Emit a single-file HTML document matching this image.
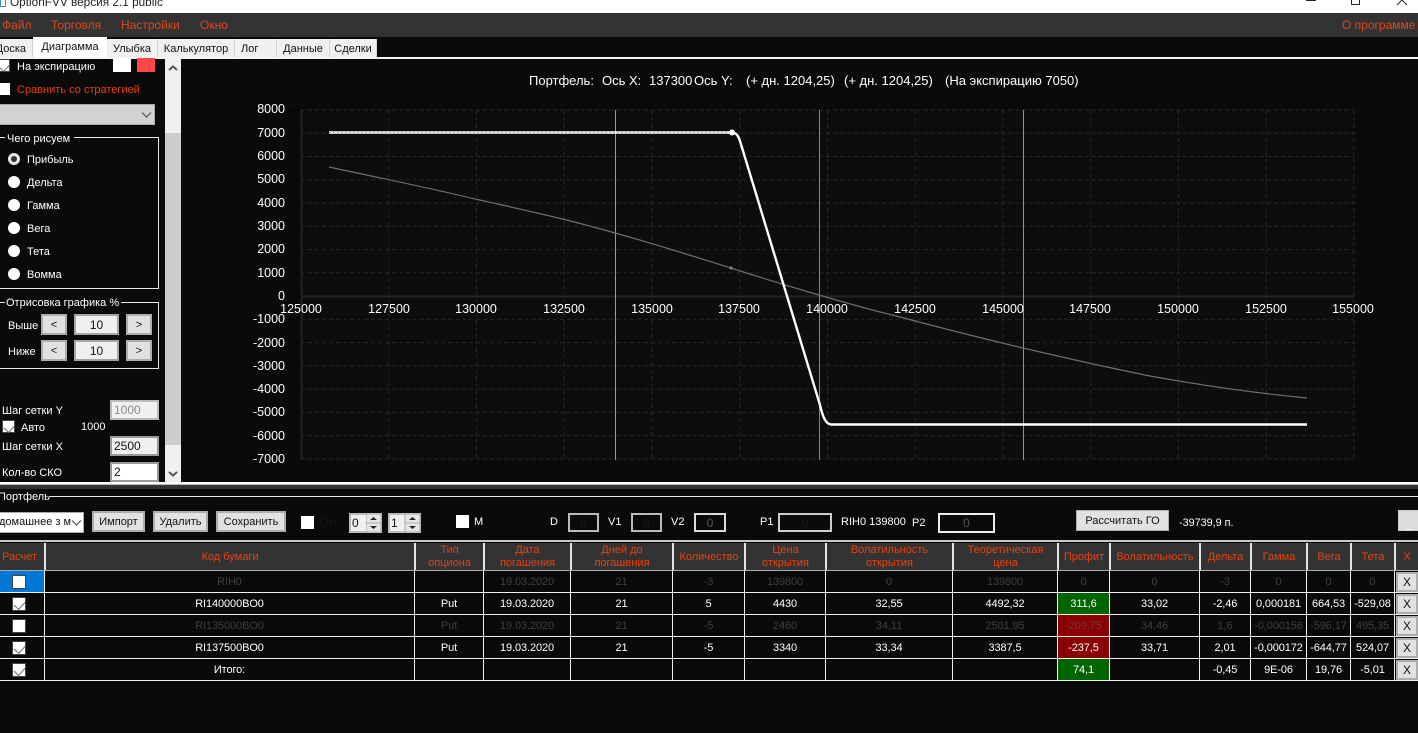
<!DOCTYPE html>
<html lang="ru"><head><meta charset="utf-8"><title>OptionFVV</title>
<style>
*{box-sizing:border-box}
html,body{margin:0;padding:0;width:1418px;height:733px;overflow:hidden;background:#0a0a0a}
body{position:relative;font-family:"Liberation Sans",sans-serif;font-size:11px;color:#fff}
.b,.t{position:absolute}
.t{white-space:nowrap;line-height:14px;height:14px}
.o{color:#e8400f}
.m{color:#d9481e;font-size:12px}
.tab{position:absolute;top:39px;height:18px;background:#f0f0f0;color:#111;text-align:center;line-height:20px;font-size:11px;border-right:1px solid #d4d4d4;overflow:hidden}
.btn{position:absolute;background:#e1e1e1;border:2px solid #adadad;color:#111;text-align:center;font-size:11px;display:flex;align-items:center;justify-content:center}
.in{position:absolute;background:#f0f0f0;border:2px solid #999;color:#111;font-size:12px;padding-left:2px;display:flex;align-items:center}
.box{position:absolute;background:#0a0a0a;border:2px solid #bbb;color:#222;font-size:12px;display:flex;align-items:center;justify-content:center}
.cb{position:absolute;width:13px;height:13px;background:#fff;border:1px solid #444}
.ck::after{content:"";position:absolute;left:3px;top:1px;width:6px;height:9px;border:solid #666;border-width:0 1.5px 1.5px 0;transform:rotate(42deg)}
.rd{position:absolute;left:8px;width:12px;height:12px;border-radius:50%;background:#fff}
.gl{position:absolute;background:#e8e8e8}
table{position:absolute;left:0;top:543px;width:1418px;table-layout:fixed;border-collapse:separate;border-spacing:0}
th{height:28px;padding:1px 0 0;background:#333;color:#e8400f;font-weight:normal;font-size:11px;line-height:13px;border-left:1px solid #e4e4e4;border-right:1px solid #e4e4e4;border-bottom:1px solid #aaa;text-align:center;overflow:hidden;white-space:nowrap}
th:first-child{border-left:0;padding-right:5px}
th:last-child{border-right:0}
td{height:22px;padding:1px 0 0;background:#0a0a0a;border-right:1px solid #f0f0f0;border-bottom:1px solid #f0f0f0;text-align:center;font-size:11px;letter-spacing:-.1px;position:relative;white-space:nowrap;overflow:hidden}
td:last-child{border-right:0}
tr.d td{color:#3e3e3e}
td.g{background:#006400}
td.r{background:#8b0000}
tr.d td.r{color:#6e3c3c}
td .cb{left:12px;top:4px;width:14px;height:14px}
.x{position:absolute;left:1px;top:1px;width:22px;height:20px;background:#e1e1e1;border:2px solid #adadad;color:#111;font-size:12px;line-height:16px;text-align:center}
</style></head><body>

<!-- title bar -->
<div class="b" style="left:0;top:0;width:1418px;height:13px;background:#fff;overflow:hidden">
<div class="t" style="left:10px;top:-5px;color:#222;font-size:11.8px">OptionFVV версия 2.1 public</div>
<div class="b" style="left:0;top:0;width:6px;height:7px;border:1px solid #3a8ad0;border-top:0"></div>
<div class="b" style="left:1306px;top:0;width:10px;height:1px;background:#222"></div>
<div class="b" style="left:1351px;top:0;width:9px;height:5px;border:1px solid #222;border-top:0"></div>
<svg class="b" style="left:1396px;top:0" width="14" height="6"><path d="M1 5L6 0L11 5" fill="none" stroke="#222"/></svg>
</div>

<!-- menu -->
<div class="b" style="left:0;top:13px;width:1418px;height:24px;background:#333"></div>
<div class="t m" style="left:2px;top:18px">Файл</div>
<div class="t m" style="left:51px;top:18px">Торговля</div>
<div class="t m" style="left:121px;top:18px">Настройки</div>
<div class="t m" style="left:200px;top:18px">Окно</div>
<div class="t m" style="left:1342px;top:18px">О программе</div>

<!-- tabs -->
<div class="tab" style="left:0;width:33px;text-align:right;padding-right:6px;direction:rtl"><span style="direction:ltr;unicode-bidi:embed">Доска</span></div>
<div class="tab" style="left:33px;top:37px;height:21px;width:74px;background:#fff;line-height:21px;border:0">Диаграмма</div>
<div class="tab" style="left:107px;width:51px">Улыбка</div>
<div class="tab" style="left:158px;width:77px">Калькулятор</div>
<div class="tab" style="left:235px;width:42px;text-align:left;padding-left:6px">Лог</div>
<div class="tab" style="left:277px;width:53px">Данные</div>
<div class="tab" style="left:330px;width:47px">Сделки</div>
<div class="b" style="left:0;top:57px;width:1418px;height:2px;background:#f4f4f4"></div>

<!-- scrollbar -->
<div class="b" style="left:165px;top:59px;width:16px;height:423px;background:#f0f0f0"></div>
<div class="b" style="left:165px;top:133px;width:16px;height:312px;background:#cdcdcd"></div>
<svg class="b" style="left:165px;top:62px" width="16" height="12"><path d="M4 8L8 4.5L12 8" fill="none" stroke="#555" stroke-width="2"/></svg>
<svg class="b" style="left:165px;top:468px" width="16" height="12"><path d="M4 4L8 7.5L12 4" fill="none" stroke="#555" stroke-width="2"/></svg>

<!-- left panel -->
<div class="cb ck" style="left:-3px;top:59px"></div>
<div class="t" style="left:17px;top:60px">На экспирацию</div>
<div class="b" style="left:113px;top:58px;width:18px;height:14px;background:#fff"></div>
<div class="b" style="left:137px;top:58px;width:18px;height:14px;background:#ff4545"></div>
<div class="cb" style="left:-3px;top:83px;border:0;height:12px"></div>
<div class="t o" style="left:17px;top:83px">Сравнить со стратегией</div>
<div class="b" style="left:-2px;top:104px;width:157px;height:21px;background:#d2d2d2;border:1px solid #aaa"></div>
<svg class="b" style="left:141px;top:111px" width="11" height="8"><path d="M1 1.5L5.5 6L10 1.5" fill="none" stroke="#555" stroke-width="1.2"/></svg>

<div class="gl" style="left:0;top:137px;width:5px;height:1px"></div>
<div class="gl" style="left:74px;top:137px;width:85px;height:1px"></div>
<div class="gl" style="left:158px;top:137px;width:1px;height:152px"></div>
<div class="gl" style="left:0;top:288px;width:159px;height:1px"></div>
<div class="t" style="left:7px;top:132px">Чего рисуем</div>
<div class="rd" style="top:153px;background:#333;border:3px solid #e8e8e8"></div>
<div class="t" style="left:27px;top:153px">Прибыль</div>
<div class="rd" style="top:176px"></div><div class="t" style="left:27px;top:176px">Дельта</div>
<div class="rd" style="top:199px"></div><div class="t" style="left:27px;top:199px">Гамма</div>
<div class="rd" style="top:222px"></div><div class="t" style="left:27px;top:222px">Вега</div>
<div class="rd" style="top:245px"></div><div class="t" style="left:27px;top:245px">Тета</div>
<div class="rd" style="top:268px"></div><div class="t" style="left:27px;top:268px">Вомма</div>

<div class="gl" style="left:0;top:302px;width:5px;height:1px"></div>
<div class="gl" style="left:121px;top:302px;width:38px;height:1px"></div>
<div class="gl" style="left:158px;top:302px;width:1px;height:67px"></div>
<div class="gl" style="left:0;top:368px;width:159px;height:1px"></div>
<div class="t" style="left:6px;top:296px;font-size:11px">Отрисовка графика %</div>
<div class="t" style="left:8px;top:319px">Выше</div>
<div class="btn" style="left:41px;top:314px;width:26px;height:21px">&lt;</div>
<div class="in" style="left:74px;top:314px;width:45px;height:21px;justify-content:center;padding:0;border-color:#a5a5a5">10</div>
<div class="btn" style="left:126px;top:314px;width:26px;height:21px">&gt;</div>
<div class="t" style="left:8px;top:345px">Ниже</div>
<div class="btn" style="left:41px;top:340px;width:26px;height:21px">&lt;</div>
<div class="in" style="left:74px;top:340px;width:45px;height:21px;justify-content:center;padding:0;border-color:#a5a5a5">10</div>
<div class="btn" style="left:126px;top:340px;width:26px;height:21px">&gt;</div>

<div class="t" style="left:2px;top:404px">Шаг сетки Y</div>
<div class="in" style="left:110px;top:400px;width:49px;height:20px;color:#8a8a8a;border-color:#bbb">1000</div>
<div class="cb ck" style="left:2px;top:420px;width:13px;height:13px"></div>
<div class="t" style="left:21px;top:421px">Авто</div>
<div class="t" style="left:81px;top:420px">1000</div>
<div class="t" style="left:2px;top:440px">Шаг сетки X</div>
<div class="in" style="left:110px;top:436px;width:49px;height:20px">2500</div>
<div class="t" style="left:2px;top:466px">Кол-во СКО</div>
<div class="in" style="left:110px;top:462px;width:49px;height:20px;background:#fff">2</div>

<!-- chart -->
<svg class="b" style="left:181px;top:59px" width="1237" height="423" viewBox="181 59 1237 423">
<rect x="301" y="110" width="1053" height="349" fill="#0d0d0d"/>
<path d="M301 133.3H1354M301 156.5H1354M301 179.8H1354M301 203H1354M301 226.3H1354M301 249.6H1354M301 272.8H1354M301 319.3H1354M301 342.6H1354M301 365.9H1354M301 389.1H1354M301 412.4H1354M301 435.6H1354M301 459H1354M301 110H1354" stroke="#262626" stroke-dasharray="4 3" fill="none"/>
<path d="M388.8 110V459M476.5 110V459M564.3 110V459M652 110V459M739.8 110V459M827.5 110V459M915.3 110V459M1003 110V459M1090.8 110V459M1178.5 110V459M1266.3 110V459M1354 110V459" stroke="#262626" stroke-dasharray="4 3" fill="none"/>
<path d="M301.5 110V459M301 296.5H1354" stroke="#242424" stroke-width="2" fill="none"/>
<path d="M288 110H301M288 319.3H301M288 296H301" stroke="#000" fill="none"/>
<path d="M615.5 110V460" stroke="#9a9a9a"/>
<path d="M819.5 110V460" stroke="#7f8890"/>
<path d="M1023.5 110V460" stroke="#b08590"/>
<path d="M329 167C380 178 430 188 475 199C525 210 570 220 615 233C655 244 695 257 731 268C765 279 795 288 819 295C850 304 875 311 900 317C945 329 985 339 1023 348C1070 359 1110 368 1150 376C1205 386 1255 393 1307 398" fill="none" stroke="#6e6e6e" stroke-width="1.2"/>
<circle cx="731" cy="268" r="1.5" fill="#888"/>
<path d="M329 132.5H731C736 132.5 738 135 740 141L820 405C823 418 826 424 831 424.5H1307" fill="none" stroke="#fff" stroke-width="2.4"/>
<path d="M329 132.5H731" stroke="#999" stroke-width="0.8" stroke-dasharray="2 2" fill="none"/>
<circle cx="732" cy="132.5" r="3" fill="#fff"/>
<g font-family="Liberation Sans" font-size="12.5" fill="#fff">
<g font-size="13">
<text x="529" y="85">Портфель:</text><text x="602" y="85">Ось X:</text><text x="649" y="85">137300</text><text x="694" y="85">Ось Y:</text><text x="746" y="85">(+ дн. 1204,25)</text><text x="844" y="85">(+ дн. 1204,25)</text><text x="945" y="85">(На экспирацию 7050)</text>
</g>
<g text-anchor="end">
<text x="285" y="113">8000</text><text x="285" y="137">7000</text><text x="285" y="160">6000</text><text x="285" y="183">5000</text><text x="285" y="207">4000</text><text x="285" y="230">3000</text><text x="285" y="253">2000</text><text x="285" y="277">1000</text><text x="285" y="300">0</text><text x="285" y="323">-1000</text><text x="285" y="347">-2000</text><text x="285" y="370">-3000</text><text x="285" y="393">-4000</text><text x="285" y="416">-5000</text><text x="285" y="440">-6000</text><text x="285" y="463">-7000</text>
</g>
<g text-anchor="middle">
<text x="301" y="313">125000</text><text x="389" y="313">127500</text><text x="476" y="313">130000</text><text x="564" y="313">132500</text><text x="652" y="313">135000</text><text x="739" y="313">137500</text><text x="827" y="313">140000</text><text x="915" y="313">142500</text><text x="1003" y="313">145000</text><text x="1090" y="313">147500</text><text x="1178" y="313">150000</text><text x="1266" y="313">152500</text><text x="1353" y="313">155000</text>
</g>
</g>
</svg>

<!-- splitter -->
<div class="b" style="left:0;top:482px;width:1418px;height:2px;background:#fff"></div>
<div class="b" style="left:0;top:484px;width:1418px;height:1px;background:#bbb"></div>
<div class="b" style="left:0;top:485px;width:1418px;height:4px;background:#333"></div>

<!-- portfolio -->
<div class="t" style="left:-2px;top:490px">Портфель</div>
<div class="gl" style="left:49px;top:496px;width:1369px;height:1px"></div>
<div class="b" style="left:-2px;top:512px;width:86px;height:21px;background:#fff;border:1px solid #aaa;color:#111;font-size:11px;line-height:19px;overflow:hidden;white-space:nowrap;padding-left:0">домашнее з м</div>
<div class="b" style="left:71px;top:513px;width:12px;height:19px;background:#fff"></div>
<svg class="b" style="left:71px;top:519px" width="11" height="8"><path d="M1 1.5L5.5 6L10 1.5" fill="none" stroke="#555" stroke-width="1.2"/></svg>
<div class="btn" style="left:92px;top:511px;width:53px;height:21px">Импорт</div>
<div class="btn" style="left:153px;top:511px;width:55px;height:21px">Удалить</div>
<div class="btn" style="left:216px;top:511px;width:70px;height:21px">Сохранить</div>
<div class="cb" style="left:301px;top:516px;border:0"></div>
<div class="t" style="left:320px;top:516px;color:#151515;font-size:12px">DH</div>
<div class="in" style="left:349px;top:513px;width:33px;height:20px;border-color:#bbb;padding-left:1px">0</div>
<div class="in" style="left:388px;top:513px;width:33px;height:20px;border-color:#bbb;padding-left:1px">1</div>
<svg class="b" style="left:366px;top:514px" width="56" height="18">
<path d="M0 0V18H15V0ZM0 9H15M39 0V18H54V0ZM39 9H54" fill="#e6e6e6" stroke="#aaa"/>
<path d="M4 6L7.5 3L11 6ZM4 12H11L7.5 15ZM43 6L46.5 3L50 6ZM43 12H50L46.5 15Z" fill="#222"/>
</svg>
<div class="cb" style="left:456px;top:515px;border:0"></div>
<div class="t" style="left:474px;top:515px">M</div>
<div class="t" style="left:550px;top:515px">D</div>
<div class="box" style="left:568px;top:513px;width:31px;height:19px;color:#181818">0</div>
<div class="t" style="left:608px;top:515px">V1</div>
<div class="box" style="left:631px;top:513px;width:31px;height:19px;color:#181818">0</div>
<div class="t" style="left:671px;top:515px">V2</div>
<div class="box" style="left:694px;top:513px;width:32px;height:19px;color:#555;border-color:#ddd">0</div>
<div class="t" style="left:760px;top:515px">P1</div>
<div class="box" style="left:778px;top:513px;width:54px;height:19px;color:#181818;border-color:#ccc">0</div>
<div class="t" style="left:841px;top:515px">RIH0 139800</div>
<div class="t" style="left:912px;top:516px">P2</div>
<div class="box" style="left:938px;top:513px;width:57px;height:20px;color:#555;border-color:#eee">0</div>
<div class="btn" style="left:1076px;top:510px;width:93px;height:21px;border-width:1px">Рассчитать ГО</div>
<div class="t" style="left:1179px;top:516px;font-size:10.8px">-39739,9 п.</div>
<div class="btn" style="left:1398px;top:510px;width:22px;height:21px;background:#dcdcdc;border-width:1px;border-color:#ccc;color:#fff;padding-top:8px">_</div>
<div class="gl" style="left:0;top:540px;width:1418px;height:2px;background:#c8c8c8"></div>

<!-- grid -->
<table>
<colgroup><col style="width:45px"><col style="width:370px"><col style="width:69px"><col style="width:87px"><col style="width:102px"><col style="width:72px"><col style="width:81px"><col style="width:127px"><col style="width:105px"><col style="width:52px"><col style="width:90px"><col style="width:51px"><col style="width:56px"><col style="width:44px"><col style="width:44px"><col style="width:23px"></colgroup>
<tr><th>Расчет</th><th>Код бумаги</th><th>Тип<br>опциона</th><th>Дата<br>погашения</th><th>Дней до<br>погашения</th><th>Количество</th><th>Цена<br>открытия</th><th>Волатильность<br>открытия</th><th>Теоретическая<br>цена</th><th>Профит</th><th>Волатильность</th><th>Дельта</th><th>Гамма</th><th>Вега</th><th>Тета</th><th>X</th></tr>
<tr class="d"><td style="background:#0078d7"><div class="cb"></div></td><td>RIH0</td><td></td><td>19.03.2020</td><td>21</td><td>-3</td><td>139800</td><td>0</td><td>139800</td><td>0</td><td>0</td><td>-3</td><td>0</td><td>0</td><td>0</td><td><div class="x">X</div></td></tr>
<tr><td><div class="cb ck"></div></td><td>RI140000BO0</td><td>Put</td><td>19.03.2020</td><td>21</td><td>5</td><td>4430</td><td>32,55</td><td>4492,32</td><td class="g">311,6</td><td>33,02</td><td>-2,46</td><td>0,000181</td><td>664,53</td><td>-529,08</td><td><div class="x">X</div></td></tr>
<tr class="d"><td><div class="cb"></div></td><td>RI135000BO0</td><td>Put</td><td>19.03.2020</td><td>21</td><td>-5</td><td>2460</td><td>34,11</td><td>2501,95</td><td class="r">-209,75</td><td>34,46</td><td>1,6</td><td>-0,000156</td><td>-596,17</td><td>495,35</td><td><div class="x">X</div></td></tr>
<tr><td><div class="cb ck"></div></td><td>RI137500BO0</td><td>Put</td><td>19.03.2020</td><td>21</td><td>-5</td><td>3340</td><td>33,34</td><td>3387,5</td><td class="r">-237,5</td><td>33,71</td><td>2,01</td><td>-0,000172</td><td>-644,77</td><td>524,07</td><td><div class="x">X</div></td></tr>
<tr><td><div class="cb ck"></div></td><td>Итого:</td><td></td><td></td><td></td><td></td><td></td><td></td><td></td><td class="g">74,1</td><td></td><td>-0,45</td><td>9E-06</td><td>19,76</td><td>-5,01</td><td><div class="x">X</div></td></tr>
</table>
</body></html>
